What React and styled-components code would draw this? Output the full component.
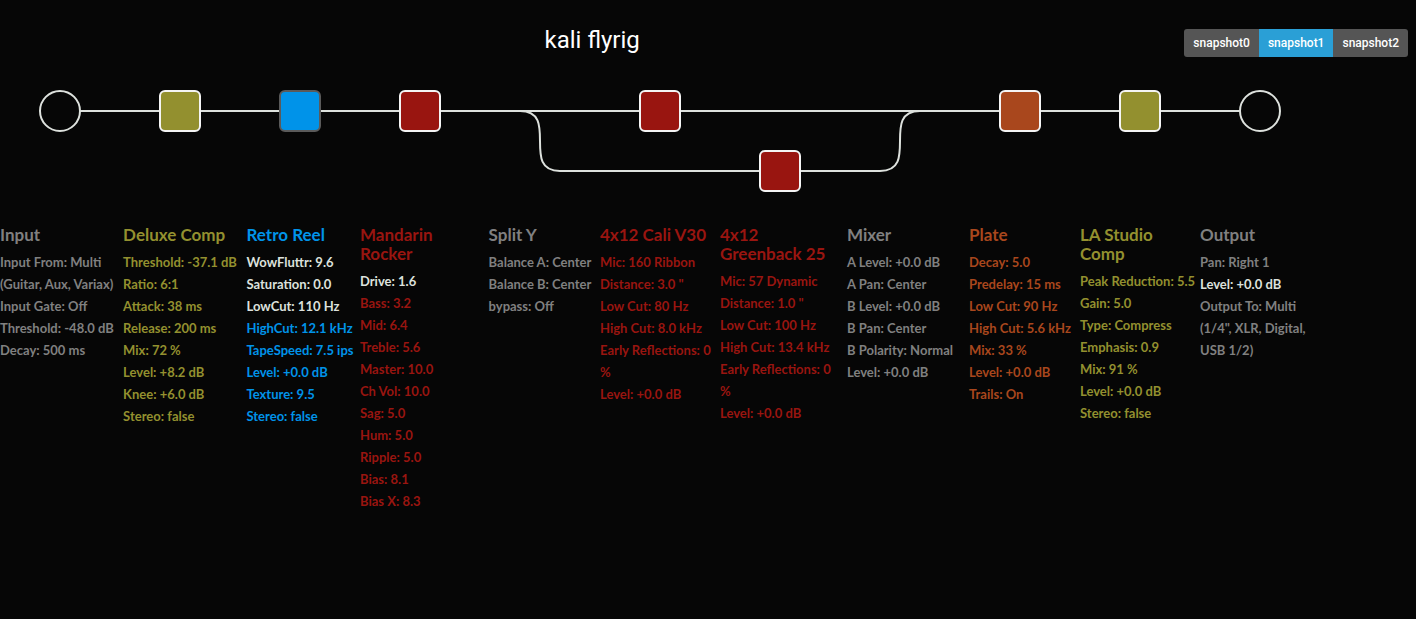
import React, { useState } from "react";
import styled, { createGlobalStyle } from "styled-components";

const palette = {
  background: "#060606",
  wire: "#dde1dd",
  outline: "#f4f4f4",
  olive: "#93902f",
  blue: "#0093e9",
  red: "#991510",
  orange: "#a9471d",
  grey: "#808080",
};

const GlobalStyle = createGlobalStyle`
  *, *::before, *::after {
    box-sizing: border-box;
  }

  body {
    margin: 0;
    background: ${palette.background};
    color: #ffffff;
    font-family: Lato, "Open Sans", sans-serif;
  }
`;

const Page = styled.main`
  min-height: 100vh;
  background: ${palette.background};
`;

const Header = styled.header`
  display: flex;
  align-items: flex-start;
  padding: 29px 8px 24px 0;
`;

const Title = styled.h1`
  flex: 1;
  margin: 0;
  font: 400 24px/22px Roboto, sans-serif;
  text-align: center;
`;

const SnapshotGroup = styled.div`
  display: flex;
  overflow: hidden;
  border-radius: 3px;
`;

const SnapshotButton = styled.button`
  height: 28px;
  padding: 0 9px;
  border: 0;
  background: ${({ $active }) => ($active ? "#2a9fd6" : "#555555")};
  color: #ffffff;
  font: 500 12px/28px Roboto, sans-serif;
  cursor: pointer;
`;

const SignalPath = styled.svg`
  display: block;
  flex: none;
`;

const Wire = styled.path`
  fill: none;
  stroke: ${palette.wire};
  stroke-width: 2px;
`;

const Terminal = styled.circle`
  fill: ${palette.background};
  stroke: ${palette.wire};
  stroke-width: 2px;
`;

const Block = styled.rect`
  fill: ${({ $color }) => palette[$color]};
  stroke: ${({ $bypassed }) => ($bypassed ? "#5a5a5a" : palette.outline)};
  stroke-width: 2px;
`;

const Columns = styled.div`
  display: flex;
  align-items: flex-start;
  margin-top: 24px;
`;

const Column = styled.section`
  display: flex;
  flex: 0 0 120px;
  justify-content: center;
  color: ${({ $color }) => palette[$color]};
`;

const ColumnTitle = styled.h2`
  margin: 0 0 7px;
  font-size: 17px;
  font-weight: 700;
  line-height: 19px;
`;

const ParamList = styled.ul`
  margin: 0;
  padding: 0;
  list-style: none;
`;

const Param = styled.li`
  color: ${({ $changed }) => ($changed ? palette.wire : "inherit")};
  font-size: 13px;
  font-weight: 700;
  line-height: 22px;
`;

const blocks = [
  { x: 180, y: 30, color: "olive" },
  { x: 300, y: 30, color: "blue", bypassed: true },
  { x: 420, y: 30, color: "red" },
  { x: 660, y: 30, color: "red" },
  { x: 780, y: 90, color: "red" },
  { x: 1020, y: 30, color: "orange" },
  { x: 1140, y: 30, color: "olive" },
];

const columns = [
  {
    name: "Input",
    color: "grey",
    params: [
      "Input From: Multi (Guitar, Aux, Variax)",
      "Input Gate: Off",
      "Threshold: -48.0 dB",
      "Decay: 500 ms",
    ],
  },
  {
    name: "Deluxe Comp",
    color: "olive",
    params: [
      "Threshold: -37.1 dB",
      "Ratio: 6:1",
      "Attack: 38 ms",
      "Release: 200 ms",
      "Mix: 72 %",
      "Level: +8.2 dB",
      "Knee: +6.0 dB",
      "Stereo: false",
    ],
  },
  {
    name: "Retro Reel",
    color: "blue",
    changed: ["WowFluttr: 9.6", "Saturation: 0.0", "LowCut: 110 Hz"],
    params: [
      "WowFluttr: 9.6",
      "Saturation: 0.0",
      "LowCut: 110 Hz",
      "HighCut: 12.1 kHz",
      "TapeSpeed: 7.5 ips",
      "Level: +0.0 dB",
      "Texture: 9.5",
      "Stereo: false",
    ],
  },
  {
    name: "Mandarin Rocker",
    color: "red",
    changed: ["Drive: 1.6"],
    params: [
      "Drive: 1.6",
      "Bass: 3.2",
      "Mid: 6.4",
      "Treble: 5.6",
      "Master: 10.0",
      "Ch Vol: 10.0",
      "Sag: 5.0",
      "Hum: 5.0",
      "Ripple: 5.0",
      "Bias: 8.1",
      "Bias X: 8.3",
    ],
  },
  {
    name: "Split Y",
    color: "grey",
    params: ["Balance A: Center", "Balance B: Center", "bypass: Off"],
  },
  {
    name: "4x12 Cali V30",
    color: "red",
    params: [
      "Mic: 160 Ribbon",
      'Distance: 3.0 "',
      "Low Cut: 80 Hz",
      "High Cut: 8.0 kHz",
      "Early Reflections: 0 %",
      "Level: +0.0 dB",
    ],
  },
  {
    name: "4x12 Greenback 25",
    color: "red",
    params: [
      "Mic: 57 Dynamic",
      'Distance: 1.0 "',
      "Low Cut: 100 Hz",
      "High Cut: 13.4 kHz",
      "Early Reflections: 0 %",
      "Level: +0.0 dB",
    ],
  },
  {
    name: "Mixer",
    color: "grey",
    params: [
      "A Level: +0.0 dB",
      "A Pan: Center",
      "B Level: +0.0 dB",
      "B Pan: Center",
      "B Polarity: Normal",
      "Level: +0.0 dB",
    ],
  },
  {
    name: "Plate",
    color: "orange",
    params: [
      "Decay: 5.0",
      "Predelay: 15 ms",
      "Low Cut: 90 Hz",
      "High Cut: 5.6 kHz",
      "Mix: 33 %",
      "Level: +0.0 dB",
      "Trails: On",
    ],
  },
  {
    name: "LA Studio Comp",
    color: "olive",
    params: [
      "Peak Reduction: 5.5",
      "Gain: 5.0",
      "Type: Compress",
      "Emphasis: 0.9",
      "Mix: 91 %",
      "Level: +0.0 dB",
      "Stereo: false",
    ],
  },
  {
    name: "Output",
    color: "grey",
    changed: ["Level: +0.0 dB"],
    params: [
      "Pan: Right 1",
      "Level: +0.0 dB",
      'Output To: Multi (1/4", XLR, Digital, USB 1/2)',
    ],
  },
];

const snapshots = ["snapshot0", "snapshot1", "snapshot2"];

export default function App() {
  const [current, setCurrent] = useState("snapshot1");

  return (
    <Page>
      <GlobalStyle />
      <Header>
        <Title>kali flyrig</Title>
        <SnapshotGroup role="group" aria-label="Snapshots">
          {snapshots.map((name) => (
            <SnapshotButton
              key={name}
              type="button"
              $active={name === current}
              aria-pressed={name === current}
              onClick={() => setCurrent(name)}
            >
              {name}
            </SnapshotButton>
          ))}
        </SnapshotGroup>
      </Header>

      <SignalPath width="1320" height="120" role="img" aria-label="Signal path">
        <Wire d="M60 30H1260" />
        <Wire d="M520 30C560 30 520 90 560 90H880C920 90 880 30 920 30" />
        <Terminal cx="60" cy="30" r="20" />
        <Terminal cx="1260" cy="30" r="20" />
        {blocks.map(({ x, y, color, bypassed }) => (
          <Block
            key={x}
            x={x - 20}
            y={y - 20}
            width="40"
            height="40"
            rx="5"
            $color={color}
            $bypassed={bypassed}
          />
        ))}
      </SignalPath>

      <Columns>
        {columns.map(({ name, color, params, changed = [] }) => (
          <Column key={name} $color={color}>
            <div>
              <ColumnTitle>{name}</ColumnTitle>
              <ParamList>
                {params.map((param) => (
                  <Param key={param} $changed={changed.includes(param)}>
                    {param}
                  </Param>
                ))}
              </ParamList>
            </div>
          </Column>
        ))}
      </Columns>
    </Page>
  );
}
